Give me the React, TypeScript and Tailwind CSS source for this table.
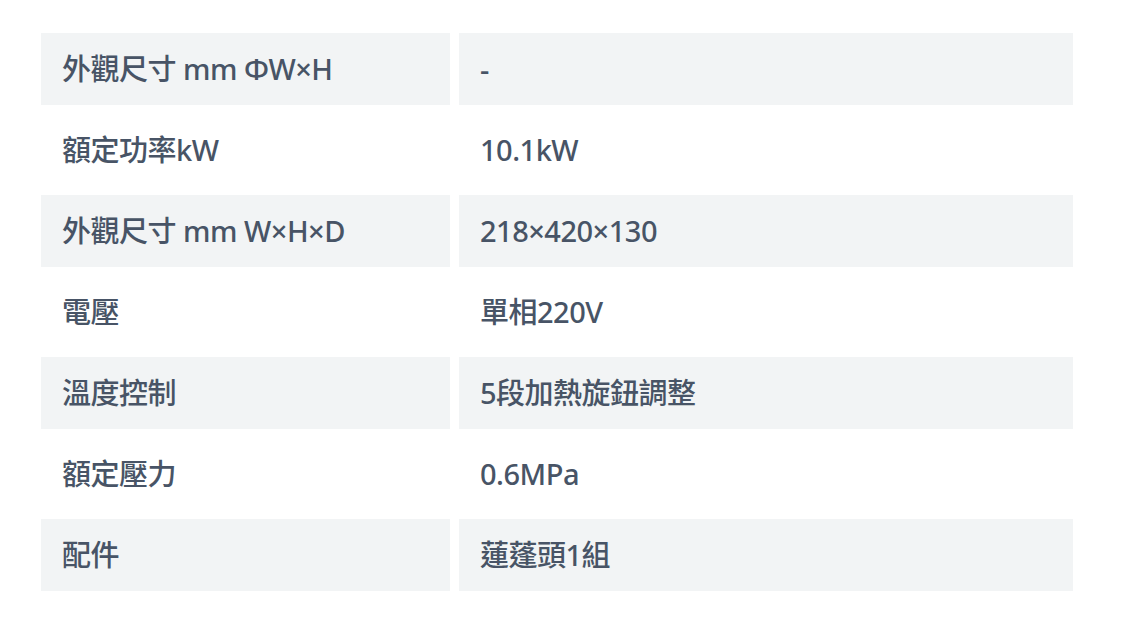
const specs: [string, string][] = [
  ["外觀尺寸 mm ΦW×H", "-"],
  ["額定功率kW", "10.1kW"],
  ["外觀尺寸 mm W×H×D", "218×420×130"],
  ["電壓", "單相220V"],
  ["溫度控制", "5段加熱旋鈕調整"],
  ["額定壓力", "0.6MPa"],
  ["配件", "蓮蓬頭1組"],
];

export default function App() {
  return (
    <div
      className="min-h-screen bg-white pl-[41px] pt-[33px]"
      style={{ fontFamily: '"Noto Sans", "Noto Sans CJK TC", sans-serif' }}
    >
      <div className="grid grid-cols-[409px_614px] gap-[9px] text-[29px] font-medium text-[#485466]">
        {specs.map(([label, value], i) => {
          const bg = i % 2 === 0 ? "bg-[#f2f4f5]" : "bg-white";
          return [
            <div key={`l${i}`} className={`${bg} h-[72px] flex items-center px-[21px] tracking-[-0.5px]`}>
              {label}
            </div>,
            <div key={`v${i}`} className={`${bg} h-[72px] flex items-center px-[21px] tracking-[-0.5px]`}>
              {value}
            </div>,
          ];
        })}
      </div>
    </div>
  );
}
